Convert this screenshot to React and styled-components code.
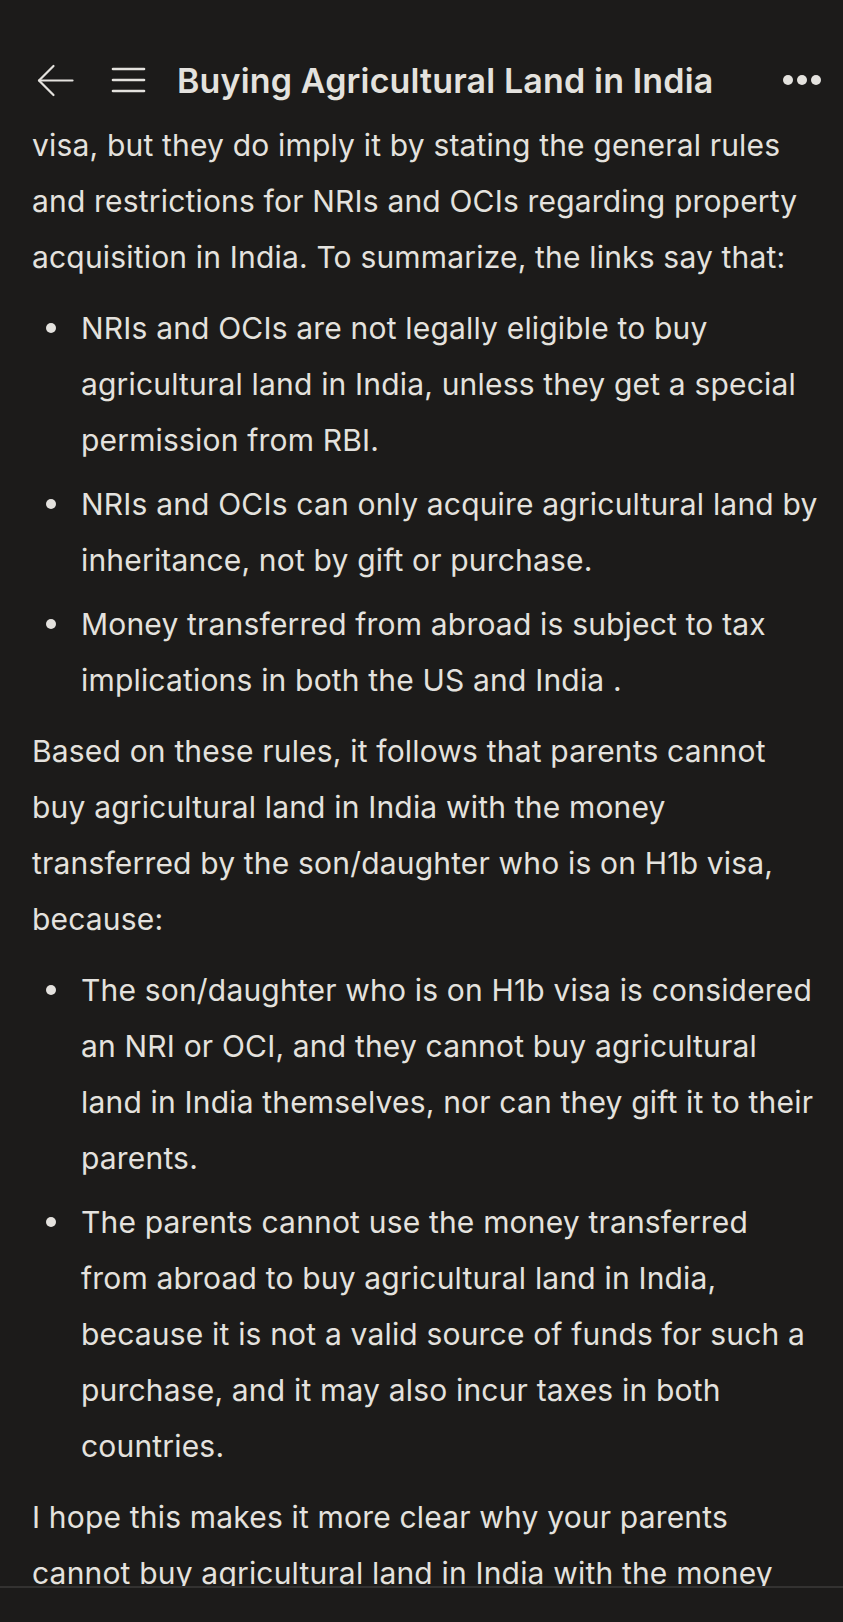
import React from 'react'
import styled, { createGlobalStyle } from 'styled-components'

//---------------------------------------------
//   Global
//---------------------------------------------
const Global = createGlobalStyle`
  html, body {
    margin: 0;
    padding: 0;
    background: #1c1b1a;
  }
  body {
    font-family: Inter, "Noto Sans", "Liberation Sans", sans-serif;
    color: #e4e2de;
  }
`

//----------------------------//
//   Styles
//----------------------------//
const Screen = styled.div`
  width: 843px;
  height: 1622px;
  overflow: hidden;
  position: relative;
  background: #1c1b1a;
`

const Header = styled.header`
  height: 117px;
  box-sizing: border-box;
  padding: 44px 22px 0 37px;
  display: flex;
  align-items: flex-start;
`

const HeaderRow = styled.div`
  height: 72px;
  flex: 1;
  display: flex;
  align-items: center;
`

const IconBtn = styled.div`
  display: flex;
  align-items: center;
  justify-content: center;
  margin-right: ${p => p.gap || 0}px;
  color: #e4e2de;
`

const Title = styled.h1`
  flex: 1;
  margin: 0;
  font-size: 34px;
  font-weight: 600;
  letter-spacing: 0.15px;
  color: #e4e2de;
  white-space: nowrap;
`

const Dots = styled.div`
  display: flex;
  gap: 4px;
  span {
    width: 10px;
    height: 10px;
    border-radius: 50%;
    background: #e4e2de;
  }
`

const Content = styled.main`
  padding: 0 0 0 32px;
  font-size: 30px;
  line-height: 56px;
  letter-spacing: 0.18px;
  white-space: nowrap;
`

const Para = styled.p`
  margin: 0 0 15px;
`

const List = styled.ul`
  list-style: none;
  margin: 0 0 15px;
  padding: 0;
  display: flex;
  flex-direction: column;
  gap: 8px;
`

const Item = styled.li`
  display: flex;
  align-items: flex-start;
`

const Bullet = styled.span`
  flex: none;
  width: 10px;
  height: 10px;
  border-radius: 50%;
  background: #e4e2de;
  margin: 23px 25px 0 14px;
`

const BottomBar = styled.div`
  position: absolute;
  left: 0;
  right: 0;
  bottom: 0;
  height: 34px;
  background: #1c1b1a;
  border-top: 2px solid #333231;
`

//---------------------------------------------
//   Data (lines as wrapped on screen)
//---------------------------------------------
const intro = [
  'visa, but they do imply it by stating the general rules',
  'and restrictions for NRIs and OCIs regarding property',
  'acquisition in India. To summarize, the links say that:',
]

const firstList = [
  ['NRIs and OCIs are not legally eligible to buy', 'agricultural land in India, unless they get a special', 'permission from RBI.'],
  ['NRIs and OCIs can only acquire agricultural land by', 'inheritance, not by gift or purchase.'],
  ['Money transferred from abroad is subject to tax', 'implications in both the US and India .'],
]

const middle = [
  'Based on these rules, it follows that parents cannot',
  'buy agricultural land in India with the money',
  'transferred by the son/daughter who is on H1b visa,',
  'because:',
]

const secondList = [
  ['The son/daughter who is on H1b visa is considered', 'an NRI or OCI, and they cannot buy agricultural', 'land in India themselves, nor can they gift it to their', 'parents.'],
  ['The parents cannot use the money transferred', 'from abroad to buy agricultural land in India,', 'because it is not a valid source of funds for such a', 'purchase, and it may also incur taxes in both', 'countries.'],
]

const outro = [
  'I hope this makes it more clear why your parents',
  'cannot buy agricultural land in India with the money',
  'transferred by the son/daughter who is on H1b visa.',
]

const Lines = ({ lines }) =>
  lines.map((l, i) => (
    <React.Fragment key={i}>
      {i > 0 && <br />}
      {l}
    </React.Fragment>
  ))

const BulletList = ({ items }) => (
  <List>
    {items.map((lines, i) => (
      <Item key={i}>
        <Bullet />
        <span><Lines lines={lines} /></span>
      </Item>
    ))}
  </List>
)

//---------------------------------------------
//   Return
//---------------------------------------------
const App = () => {
  return (
    <Screen>
      <Global />
      <Header>
        <HeaderRow>
          <IconBtn gap={37}>
            <svg width="37" height="33" viewBox="0 0 37 33" fill="none" stroke="currentColor" strokeWidth="2.2" strokeLinecap="round" strokeLinejoin="round">
              <path d="M35.5 16.5H2" />
              <path d="M16.5 2L2 16.5 16.5 31" />
            </svg>
          </IconBtn>
          <IconBtn gap={31}>
            <svg width="35" height="26" viewBox="0 0 35 26" fill="none" stroke="currentColor" strokeWidth="2.6" strokeLinecap="round">
              <path d="M2 2h31" />
              <path d="M2 13h31" />
              <path d="M2 24h31" />
            </svg>
          </IconBtn>
          <Title>Buying Agricultural Land in India</Title>
          <Dots>
            <span />
            <span />
            <span />
          </Dots>
        </HeaderRow>
      </Header>

      <Content>
        <Para><Lines lines={intro} /></Para>
        <BulletList items={firstList} />
        <Para><Lines lines={middle} /></Para>
        <BulletList items={secondList} />
        <Para><Lines lines={outro} /></Para>
      </Content>

      <BottomBar />
    </Screen>
  )
}

export default App
